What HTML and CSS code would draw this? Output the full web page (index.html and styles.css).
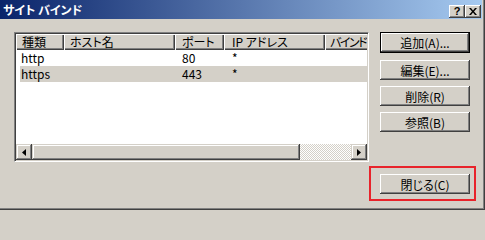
FILE: index.html
```html
<!DOCTYPE html>
<html lang="ja">
<head>
<meta charset="utf-8">
<title>サイト バインド</title>
<link rel="stylesheet" href="styles.css">
</head>
<body>
<div class="window">
  <div class="titlebar">
    <span class="title">サイト バインド</span>
    <div class="caption-btns">
      <span class="cbtn help">?</span>
      <span class="cbtn close"><svg width="8" height="7" viewBox="0 0 8 7"><path d="M0 0h2l2 2.5 2-2.5h2l-3 3.5 3 3.5h-2l-2-2.5-2 2.5h-2l3-3.5z"/></svg></span>
    </div>
  </div>
  <div class="content">
    <div class="listview">
      <div class="lv-content">
        <div class="lv-header">
          <div class="hcell c1">種類</div>
          <div class="hcell c2">ホスト名</div>
          <div class="hcell c3">ポート</div>
          <div class="hcell c4">IP アドレス</div>
          <div class="hcell c5">バインド</div>
        </div>
        <div class="lv-row">
          <div class="cell c1">http</div>
          <div class="cell c2"></div>
          <div class="cell c3">80</div>
          <div class="cell c4">*</div>
          <div class="cell c5"></div>
        </div>
        <div class="lv-row sel">
          <div class="cell c1">https</div>
          <div class="cell c2"></div>
          <div class="cell c3">443</div>
          <div class="cell c4">*</div>
          <div class="cell c5"></div>
        </div>
      </div>
      <div class="hscroll">
        <div class="sb-btn"><svg width="4" height="7" viewBox="0 0 4 7"><path d="M4 0v7L0 3.5z"/></svg></div>
        <div class="sb-thumb"></div>
        <div class="sb-track"></div>
        <div class="sb-btn"><svg width="4" height="7" viewBox="0 0 4 7"><path d="M0 0v7L4 3.5z"/></svg></div>
      </div>
    </div>
    <div class="buttons">
      <button class="btn default">追加(A)...</button>
      <button class="btn">編集(E)...</button>
      <button class="btn">削除(R)</button>
      <button class="btn">参照(B)</button>
      <div class="close-wrap">
        <button class="btn">閉じる(C)</button>
        <div class="highlight"></div>
      </div>
    </div>
  </div>
</div>
</body>
</html>
```
FILE: styles.css
```css
html, body {
  margin: 0;
  padding: 0;
  background: #d4d0c8;
}
body {
  width: 485px;
  height: 210px;
  overflow: hidden;
  font-family: "Noto Sans CJK JP", "Liberation Sans", sans-serif;
  font-size: 12px;
  font-feature-settings: "palt" 1;
  color: #000;
}
.window {
  width: 485px;
  height: 210px;
  box-sizing: border-box;
  background: #d4d0c8;
  border-right: 1px solid #404040;
  border-bottom: 1px solid #404040;
  box-shadow: inset -1px -1px #808080;
}
.titlebar {
  width: 482px;
  height: 19px;
  box-sizing: border-box;
  padding: 0 1px 0 3px;
  display: flex;
  justify-content: space-between;
  align-items: flex-start;
  background: linear-gradient(to right, #0a246a, #a6caf0);
}
.title {
  color: #fff;
  font-weight: bold;
  font-size: 12px;
  line-height: 19px;
}
.caption-btns {
  display: flex;
  margin-top: 5px;
}
.cbtn {
  width: 16px;
  height: 13px;
  box-sizing: border-box;
  background: #d4d0c8;
  box-shadow: inset -1px -1px #404040, inset 1px 1px #fff, inset -2px -2px #808080;
  display: flex;
  align-items: center;
  justify-content: center;
}
.help {
  font-family: "Liberation Sans", sans-serif;
  font-weight: bold;
  font-size: 11px;
  line-height: 13px;
}
.close svg {
  display: block;
}
.content {
  display: flex;
  padding: 13px 0 0 14px;
}
.listview {
  width: 355px;
  height: 130px;
  box-sizing: border-box;
  border: 1px solid;
  border-color: #808080 #fff #fff #808080;
  padding: 1px;
  box-shadow: inset 1px 1px #404040, inset -1px -1px #d4d0c8;
  background: #fff;
  display: flex;
  flex-direction: column;
}
.lv-content {
  flex: 1;
  overflow: hidden;
  background: #fff;
}
.lv-header, .lv-row {
  display: flex;
  width: 389px;
  height: 16px;
  line-height: 16px;
}
.hcell, .cell {
  flex-shrink: 0;
  box-sizing: border-box;
  padding-left: 6px;
  white-space: nowrap;
  overflow: hidden;
}
.hcell {
  background: #d4d0c8;
  box-shadow: inset 1px 1px #fff, inset -1px -1px #404040, inset -2px -2px #808080;
}
.c1 { width: 48px; }
.c2 { width: 111px; }
.c3 { width: 49px; padding-left: 7px; }
.c4 { width: 101px; padding-left: 8px; }
.c5 { width: 80px; padding-left: 5px; }
.hcell.c5 { letter-spacing: -1.5px; }
.cell.c1 { padding-left: 5px; }
.lv-row.sel {
  background: linear-gradient(to right, #fff 0 4px, #d4d0c8 4px);
}
.hscroll {
  display: flex;
  height: 16px;
  flex-shrink: 0;
}
.sb-btn, .sb-thumb {
  background: #d4d0c8;
  box-shadow: inset -1px -1px #404040, inset 1px 1px #d4d0c8, inset -2px -2px #808080, inset 2px 2px #fff;
}
.sb-btn {
  width: 16px;
  height: 16px;
  display: flex;
  align-items: center;
  justify-content: center;
}
.sb-btn svg { display: block; }
.sb-thumb {
  width: 268px;
  height: 16px;
}
.sb-track {
  flex: 1;
  background: repeating-conic-gradient(#fff 0 25%, #d4d0c8 0 50%) 0 0 / 2px 2px;
}
.buttons {
  display: flex;
  flex-direction: column;
  margin-left: 11px;
  width: 90px;
}
.btn {
  width: 90px;
  height: 20px;
  padding: 0;
  margin: 0 0 6px 0;
  border: none;
  background: #d4d0c8;
  font-family: "Noto Sans CJK JP", "Liberation Sans", sans-serif;
  font-size: 12px;
  font-feature-settings: "palt" 1;
  color: #000;
  box-shadow: inset -1px -1px #404040, inset 1px 1px #fff, inset -2px -2px #808080, inset 2px 2px #d4d0c8;
}
.btn.default {
  height: 21px;
  border: 1px solid #000;
  box-sizing: border-box;
  margin-bottom: 7px;
}
.close-wrap {
  position: relative;
  margin-top: 36px;
}
.close-wrap .btn { margin: 0; display: block; }
.highlight {
  position: absolute;
  top: -8px;
  left: -11px;
  width: 107px;
  height: 35px;
  box-sizing: border-box;
  border: 2px solid #e8232b;
}
```
